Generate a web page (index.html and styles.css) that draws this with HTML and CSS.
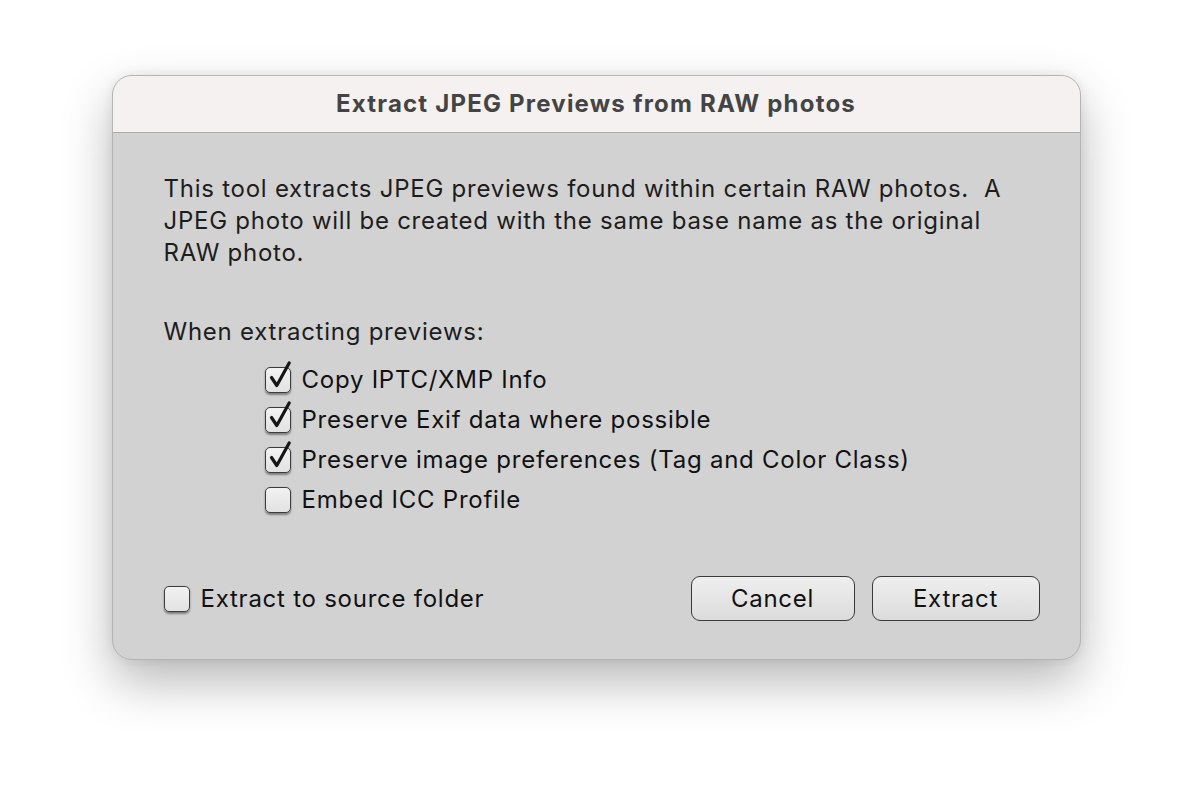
FILE: index.html
```html
<!DOCTYPE html>
<html>
<head>
<meta charset="utf-8">
<link rel="stylesheet" href="styles.css">
</head>
<body>
<div class="window">
  <div class="titlebar">Extract JPEG Previews from RAW photos</div>
  <div class="content">
    <p class="intro">This tool extracts JPEG previews found within certain RAW photos.&nbsp; A<br>JPEG photo will be created with the same base name as the original<br>RAW photo.</p>
    <p class="label">When extracting previews:</p>
    <div class="options">
      <div class="row"><span class="cb checked"><svg viewBox="0 0 30 30" width="30" height="30"><path d="M6.5 15.5 L11.8 23.5 L24.2 1" fill="none" stroke="#151515" stroke-width="3.2" stroke-linecap="round" stroke-linejoin="round"/></svg></span><span>Copy IPTC/XMP Info</span></div>
      <div class="row"><span class="cb checked"><svg viewBox="0 0 30 30" width="30" height="30"><path d="M6.5 15.5 L11.8 23.5 L24.2 1" fill="none" stroke="#151515" stroke-width="3.2" stroke-linecap="round" stroke-linejoin="round"/></svg></span><span>Preserve Exif data where possible</span></div>
      <div class="row"><span class="cb checked"><svg viewBox="0 0 30 30" width="30" height="30"><path d="M6.5 15.5 L11.8 23.5 L24.2 1" fill="none" stroke="#151515" stroke-width="3.2" stroke-linecap="round" stroke-linejoin="round"/></svg></span><span>Preserve image preferences (Tag and Color Class)</span></div>
      <div class="row"><span class="cb"></span><span>Embed ICC Profile</span></div>
    </div>
    <div class="footer">
      <div class="row"><span class="cb"></span><span>Extract to source folder</span></div>
      <div class="buttons">
        <button class="btn cancel">Cancel</button>
        <button class="btn extract">Extract</button>
      </div>
    </div>
  </div>
</div>
</body>
</html>
```
FILE: styles.css
```css
html, body {
  margin: 0;
  padding: 0;
  background: #ffffff;
}
body {
  box-sizing: border-box;
  min-height: 806px;
  padding-top: 75px;
  font-family: Inter, "Liberation Sans", sans-serif;
  color: #1d1d1d;
}
.window {
  width: 967px;
  margin: 0 auto;
  border: 1px solid #b4b4b4;
  border-radius: 20px;
  overflow: hidden;
  background: #d2d2d2;
  box-shadow: 0 22px 50px rgba(0,0,0,0.28), 0 0 12px rgba(0,0,0,0.08);
}
.titlebar {
  height: 56px;
  line-height: 56px;
  background: #f4f1f0;
  border-bottom: 1px solid #aaaaaa;
  text-align: center;
  font-weight: 700;
  font-size: 24px;
  color: #444444;
  letter-spacing: 1.2px;
}
.content {
  padding: 40px 40px 38px 51px;
  font-size: 24px;
  line-height: 32px;
  letter-spacing: 0.75px;
}
.intro {
  margin: 0;
  white-space: nowrap;
}
.label {
  margin: 47px 0 0 0;
}
.options {
  margin: 12px 0 0 101px;
}
.row {
  display: flex;
  align-items: center;
  height: 40px;
  gap: 11px;
  color: #111;
}
.cb {
  position: relative;
  width: 24px;
  height: 24px;
  border: 1.5px solid #3c3c3c;
  border-radius: 5px;
  background: linear-gradient(#f2f2f2, #e2e2e2);
  box-shadow: 0 1.5px 2px rgba(0,0,0,0.4);
  flex: none;
}
.cb svg {
  position: absolute;
  left: -1px;
  top: -6px;
  overflow: visible;
}
.footer {
  margin-top: 56px;
  display: flex;
  align-items: center;
  justify-content: space-between;
}
.buttons {
  display: flex;
  gap: 17px;
}
.btn {
  height: 45px;
  border: 1.5px solid #3a3a3a;
  border-radius: 9px;
  background: linear-gradient(#efefef, #dcdcdc);
  font-family: Inter, "Liberation Sans", sans-serif;
  font-size: 24px;
  letter-spacing: 0.75px;
  color: #111;
  padding: 0;
}
.cancel { width: 164px; }
.extract { width: 168px; }
```
